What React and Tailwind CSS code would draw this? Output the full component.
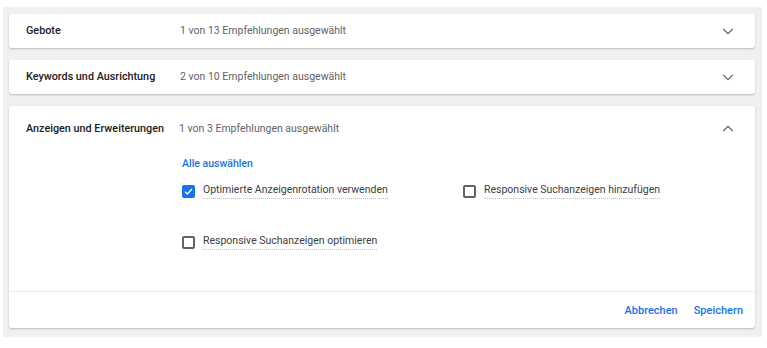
import React from 'react';

const Chevron = ({ up }) => (
  <svg width="16" height="16" viewBox="0 0 24 24" className="text-[#5f6368]">
    <path d={up ? 'M5 15 L12 8 L19 15' : 'M5 9 L12 16 L19 9'} fill="none" stroke="currentColor" strokeWidth="1.7" />
  </svg>
);

const Box = ({ checked }) =>
  checked ? (
    <span className="flex h-[13px] w-[13px] items-center justify-center rounded-[2px] bg-[#1a73e8]">
      <svg width="11" height="11" viewBox="0 0 24 24">
        <path d="M4.5 12.5 L9.5 17.5 L19.5 6.5" fill="none" stroke="#fff" strokeWidth="3" />
      </svg>
    </span>
  ) : (
    <span className="h-[13px] w-[13px] rounded-[2px] border-2 border-[#5f6368]" />
  );

const Option = ({ label, checked }) => (
  <div className="flex items-center gap-[8px]">
    <Box checked={checked} />
    <span className="border-b border-dotted border-[#bdc1c6] pb-[1px] leading-[14px]">{label}</span>
  </div>
);

const Row = ({ title, sub }) => (
  <div className="flex h-[34px] items-center rounded-[3px] bg-white pl-[17px] pr-[19px] shadow-[0_1px_2px_rgba(60,64,67,0.3)]">
    <span className="w-[154px] text-[10.8px] font-medium text-[#202124]">{title}</span>
    <span className="flex-1 text-[#5f6368]">{sub}</span>
    <Chevron />
  </div>
);

export default function App() {
  return (
    <div className="bg-white pt-[7px] pl-[3px] text-[10.5px] font-['Roboto',sans-serif] h-[348px]">
      <div className="flex h-[330px] w-[759px] flex-col bg-[#eff0f1] pt-[7px] pl-[6px] pr-[7px]">
        <Row title="Gebote" sub="1 von 13 Empfehlungen ausgewählt" />
        <div className="h-[12px]" />
        <Row title="Keywords und Ausrichtung" sub="2 von 10 Empfehlungen ausgewählt" />
        <div className="h-[12px]" />
        <div className="flex h-[222px] flex-col rounded-[3px] bg-white shadow-[0_1px_2px_rgba(60,64,67,0.3)]">
          <div className="flex h-[46px] items-center pl-[17px] pr-[19px]">
            <span className="w-[153px] text-[10.8px] font-medium text-[#202124]">Anzeigen und Erweiterungen</span>
            <span className="flex-1 text-[#5f6368]">1 von 3 Empfehlungen ausgewählt</span>
            <Chevron up />
          </div>
          <div className="flex flex-1 flex-col pl-[173px] text-[#3c4043]">
            <div className="mt-[5px] font-medium text-[#1a73e8] leading-[14px]">Alle auswählen</div>
            <div className="mt-[12px] grid grid-cols-[281px_1fr] gap-y-[35px]">
              <Option label="Optimierte Anzeigenrotation verwenden" checked />
              <Option label="Responsive Suchanzeigen hinzufügen" />
              <Option label="Responsive Suchanzeigen optimieren" />
            </div>
          </div>
          <div className="flex h-[37px] items-center justify-end gap-[16px] border-t border-[#e8eaed] pr-[12px] pt-[2px] text-[11px] font-medium text-[#1a73e8]">
            <span>Abbrechen</span>
            <span>Speichern</span>
          </div>
        </div>
      </div>
    </div>
  );
}
